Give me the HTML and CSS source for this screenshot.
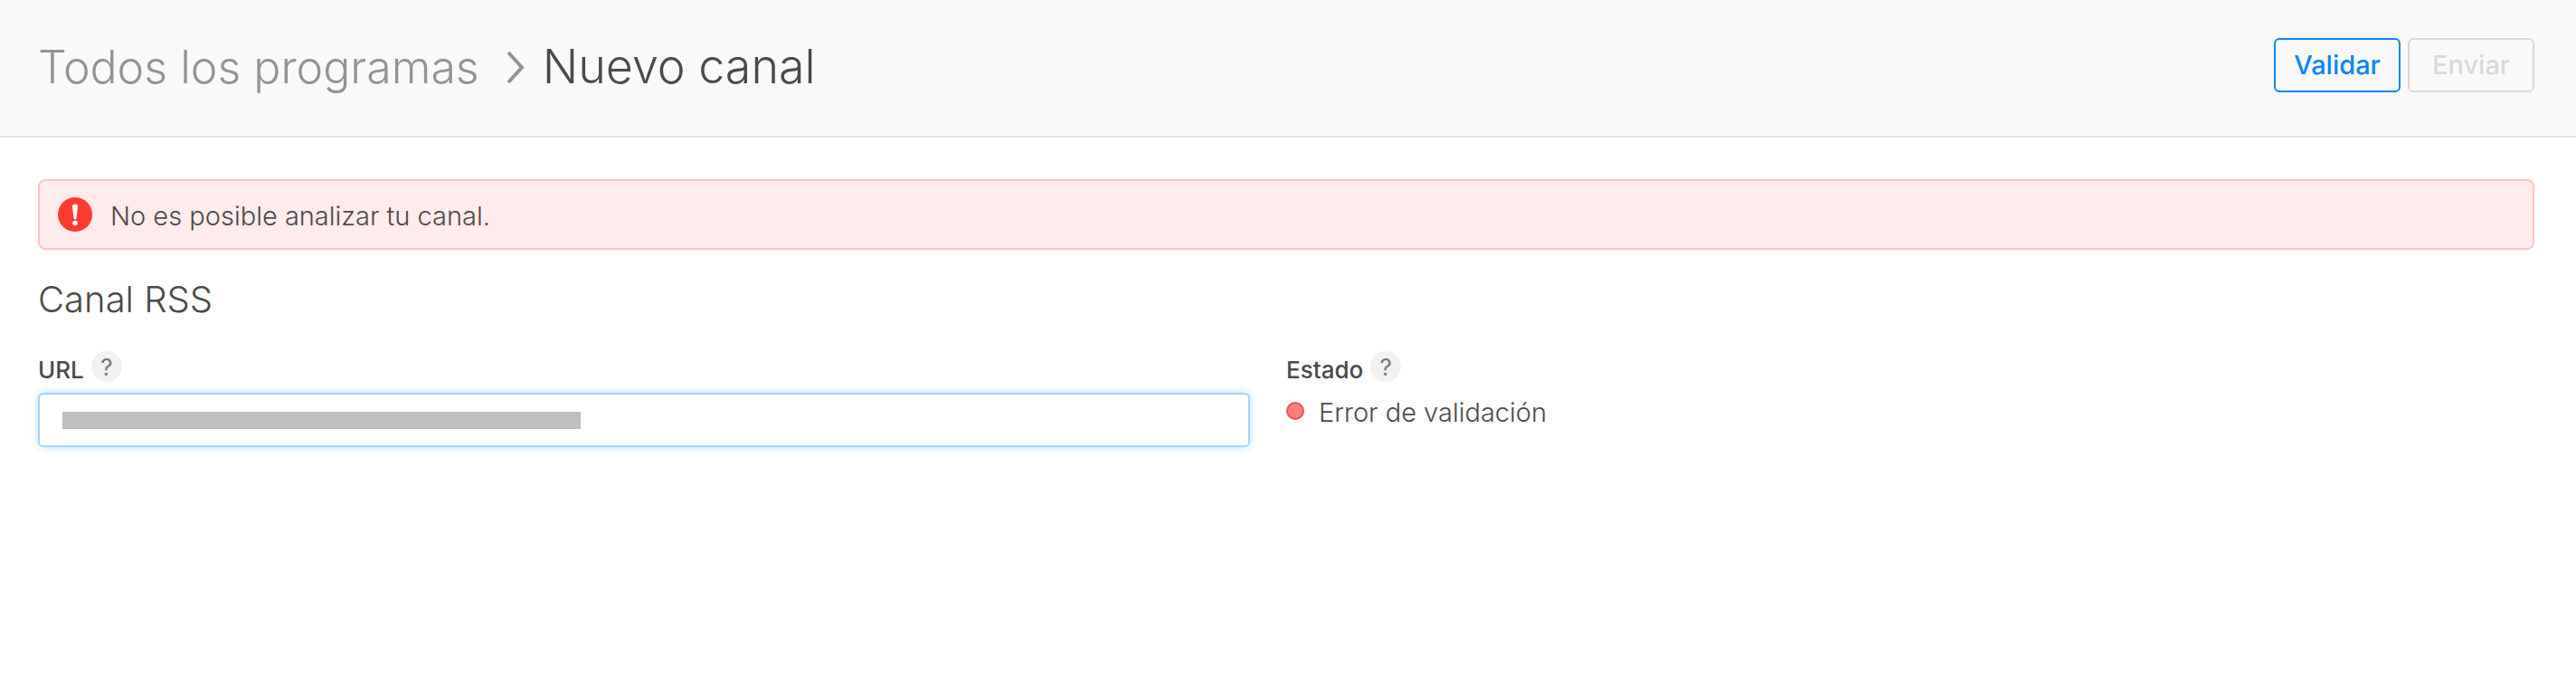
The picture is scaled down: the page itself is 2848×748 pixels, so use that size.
FILE: index.html
```html
<!DOCTYPE html>
<html lang="es">
<head>
  <meta charset="UTF-8">
  <title>Nuevo canal</title>
  <meta name="viewport" content="width=device-width, initial-scale=1.0">
  <link rel="stylesheet" href="styles.css">
</head>
<body>

  <header>
    <nav class="breadcrumb">
      <a href="#">Todos los programas</a>
      <svg class="chevron" width="20" height="37" viewBox="0 0 20 37" aria-hidden="true">
        <path d="M2 2 L17 18.5 L2 35" fill="none" stroke="#939393" stroke-width="4"/>
      </svg>
      <h1>Nuevo canal</h1>
    </nav>
    <div class="header-actions">
      <button type="submit" form="feedForm" class="btn btn-primary">Validar</button>
      <button type="button" class="btn" disabled>Enviar</button>
    </div>
  </header>

  <main>
    <div class="alert" role="alert">
      <svg width="38" height="38" viewBox="0 0 38 38" aria-hidden="true">
        <circle cx="19" cy="19" r="19" fill="#ff3b30"/>
        <path d="M16 10 Q16 7.500 19 7.500 Q22 7.500 22 10 L20.500 23.500 Q19 25.500 17.500 23.500 Z" fill="#fff"/>
        <circle cx="19" cy="28.500" r="2.800" fill="#fff"/>
      </svg>
      <p>No es posible analizar tu canal.</p>
    </div>

    <h2>Canal RSS</h2>

    <form id="feedForm" class="fields">
      <div class="field">
        <div class="field-label">
          <label for="feedUrl">URL</label>
          <button type="button" class="help-btn">?</button>
        </div>
        <input type="url" id="feedUrl" class="redacted">
      </div>
      <div class="field">
        <div class="field-label">
          <span>Estado</span>
          <button type="button" class="help-btn">?</button>
        </div>
        <p class="status"><span class="status-dot"></span>Error de validación</p>
      </div>
    </form>
  </main>

</body>
</html>
```
FILE: styles.css
```css
* {
  box-sizing: border-box;
}

body {
  margin: 0;
  background-color: #fff;
  color: #4a4a4a;
  font-family: Inter, "Liberation Sans", sans-serif;
  font-size: 29px;
  font-weight: 300;
}

h1, h2, p {
  margin: 0;
  font-weight: 300;
}

header {
  display: flex;
  justify-content: space-between;
  align-items: flex-start;
  padding: 42px 46px 44px 42px;
  background-color: #f9f9f9;
  border-bottom: 2px solid #e3e3e3;
}

.breadcrumb {
  display: flex;
  align-items: center;
  font-size: 50px;
  line-height: 64px;
}

.breadcrumb a {
  color: #939393;
  text-decoration: none;
}

.breadcrumb h1 {
  font-size: 52px;
}

.chevron {
  margin: 0 20px 0 30px;
}

.header-actions {
  display: flex;
  gap: 8px;
}

.btn {
  width: 140px;
  height: 60px;
  padding: 0 0 2px;
  border: 2px solid #0a84ff;
  border-radius: 6px;
  background: transparent;
  color: #0a84ff;
  font-family: inherit;
  font-size: 29px;
  font-weight: 500;
  cursor: pointer;
}

.btn:disabled {
  border-color: #d9d9d9;
  color: #d9d9d9;
  cursor: default;
}

main {
  padding: 46px 46px 42px 42px;
}

.alert {
  display: flex;
  align-items: center;
  gap: 20px;
  padding: 18px 20px;
  border: 2px solid #ffc4c0;
  border-radius: 8px;
  background-color: #ffebeb;
}

.alert p {
  padding-top: 4px;
  line-height: 34px;
}

h2 {
  margin-top: 30px;
  font-size: 40px;
  line-height: 50px;
}

.fields {
  display: grid;
  grid-template-columns: 1fr 1fr;
  margin-top: 32px;
}

.field:first-child {
  padding-right: 40px;
}

.field-label {
  display: flex;
  align-items: flex-start;
  gap: 8px;
  height: 46px;
  font-size: 26px;
  font-weight: 500;
  line-height: 42px;
}

.help-btn {
  width: 34px;
  height: 34px;
  padding: 0;
  border: none;
  border-radius: 50%;
  background-color: #f1f1f1;
  color: #777;
  font-family: inherit;
  font-size: 26px;
  cursor: pointer;
}

input {
  display: block;
  width: 100%;
  height: 60px;
  padding: 0 25px;
  border: 2px solid #a3d4ff;
  border-radius: 6px;
  outline: none;
  background-color: #fff;
  box-shadow: 0 0 10px #b5dcff;
  font-family: inherit;
  font-size: 29px;
}

.redacted {
  background-image: linear-gradient(#bfbfbf, #bfbfbf);
  background-position: 25px 19px;
  background-size: 573px 19px;
  background-repeat: no-repeat;
}

.status {
  display: flex;
  align-items: center;
  gap: 16px;
  line-height: 44px;
}

.status-dot {
  width: 20px;
  height: 20px;
  margin-bottom: 4px;
  border: 2px solid #e0575b;
  border-radius: 50%;
  background-color: #ff7b7d;
}
```
